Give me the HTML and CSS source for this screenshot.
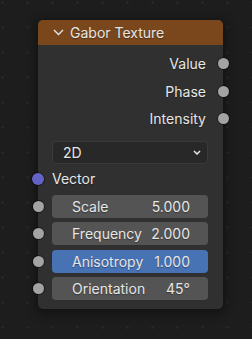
FILE: index.html
```html
<!DOCTYPE html>
<html lang="en">

<head>
    <meta charset="UTF-8">
    <meta name="viewport" content="width=device-width, initial-scale=1.0">
    <title>Gabor Texture node</title>
    <link rel="stylesheet" href="styles.css">
</head>

<body>

    <div class="node">
        <div class="header">
            <svg class="collapse" width="11" height="7" viewBox="0 0 11 7">
                <path d="M1 1 L5.5 5.5 L10 1" fill="none" stroke="#e6e6e6" stroke-width="1.4" />
            </svg>
            <span>Gabor Texture</span>
        </div>

        <div class="body">
            <div class="row output">Value<i class="socket out"></i></div>
            <div class="row output">Phase<i class="socket out"></i></div>
            <div class="row output">Intensity<i class="socket out"></i></div>

            <div class="dropdown">
                <span>2D</span>
                <svg width="8" height="5" viewBox="0 0 8 5">
                    <path d="M1 1 L4 4 L7 1" fill="none" stroke="#e6e6e6" stroke-width="1.5" />
                </svg>
            </div>

            <div class="row input">Vector<i class="socket in vector"></i></div>

            <div class="field">
                <span>Scale</span><span>5.000</span><i class="socket in"></i>
            </div>
            <div class="field">
                <span>Frequency</span><span>2.000</span><i class="socket in"></i>
            </div>
            <div class="field active">
                <span>Anisotropy</span><span>1.000</span><i class="socket in"></i>
            </div>
            <div class="field">
                <span>Orientation</span><span>45°</span><i class="socket in"></i>
            </div>
        </div>
    </div>

</body>

</html>
```

FILE: styles.css
```css
* {
    margin: 0;
    padding: 0;
    box-sizing: border-box;
}

body {
    width: 252px;
    height: 339px;
    padding: 20px 0 0 38px;
    background-color: #1d1d1d;
    background-image: radial-gradient(circle, #282828 1px, transparent 1.5px);
    background-size: 25px 25px;
    background-position: -10px -10px;
    font-family: Inter, "DejaVu Sans", sans-serif;
    font-size: 14px;
    color: #e6e6e6;
    text-shadow: 0 1px 1px rgba(0, 0, 0, 0.35);
    overflow: hidden;
}

.node {
    width: 185px;
    border-radius: 5px;
    background: #303030;
    box-shadow: 0 2px 10px 3px rgba(0, 0, 0, 0.35);
}

.header {
    height: 25px;
    display: flex;
    align-items: center;
    gap: 6px;
    padding-left: 15px;
    background: #7a471d;
    border-radius: 5px 5px 0 0;
}

.body {
    display: flex;
    flex-direction: column;
    padding: 5px 15px 9px 14px;
}

.row {
    height: 27.5px;
    display: flex;
    align-items: center;
    position: relative;
}

.output {
    justify-content: flex-end;
    padding-right: 2px;
}

.input {
    height: 24px;
    margin: 3px 0 4px;
}

.socket {
    position: absolute;
    top: 50%;
    width: 11px;
    height: 11px;
    margin-top: -5.5px;
    border-radius: 50%;
    background: #a3a3a3;
    box-shadow: 0 0 0 1px rgba(0, 0, 0, 0.4);
}

.socket.out {
    right: -20.5px;
}

.socket.in {
    left: -19.5px;
}

.socket.vector {
    width: 12px;
    height: 12px;
    margin-top: -6px;
    left: -20px;
    background: #6363c7;
}

.dropdown {
    height: 23px;
    margin-top: 8px;
    display: flex;
    align-items: center;
    justify-content: space-between;
    padding: 0 6px 0 10px;
    background: #282828;
    border: 1px solid #3a3a3a;
    border-radius: 4px;
}

.field {
    height: 23px;
    margin-bottom: 4.5px;
    display: flex;
    align-items: center;
    justify-content: space-between;
    padding: 0 18px 0 20px;
    background: #545454;
    border-radius: 4px;
    position: relative;
}

.field:last-child {
    margin-bottom: 0;
}

.field.active {
    background: #4772b3;
}
```
